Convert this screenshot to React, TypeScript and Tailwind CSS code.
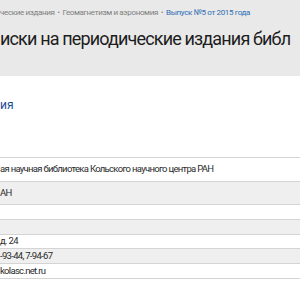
const rows: { text: string; h: string; bg: string }[] = [
  { text: "ая научная библиотека Кольского научного центра РАН", h: "h-[24px]", bg: "bg-white" },
  { text: "АН", h: "h-[23px]", bg: "bg-[#efefef]" },
  { text: "", h: "h-[15px]", bg: "bg-white" },
  { text: "", h: "h-[15px]", bg: "bg-[#efefef]" },
  { text: "д. 24", h: "h-[14px]", bg: "bg-white" },
  { text: "-93-44, 7-94-67", h: "h-[15px]", bg: "bg-[#efefef]" },
  { text: "kolasc.net.ru", h: "h-[15px]", bg: "bg-white" },
];

export default function App() {
  return (
    <div className="w-[300px] h-[300px] overflow-hidden bg-white font-['Roboto',sans-serif]">
      {/* Header with breadcrumbs and title */}
      <div className="h-[76px] bg-[#e9e9e9] pt-[7px] overflow-hidden">
        <div className="flex items-center gap-[3px] whitespace-nowrap text-[8px] leading-[12px] tracking-[-0.35px] text-[#7f7f7f]">
          <span>ческие издания</span>
          <span className="text-[7px]">•</span>
          <span>Геомагнетизм и аэрономия</span>
          <span className="text-[7px]">•</span>
          <span className="text-[#2f6db5]">Выпуск №5 от 2015 года</span>
        </div>
        <h1 className="mt-[8px] whitespace-nowrap text-[18px] leading-[24px] tracking-[-0.85px] text-[#1d1d1d]">
          иски на периодические издания библ
        </h1>
      </div>

      {/* Publisher block */}
      <div className="h-[81px] pt-[16px]">
        <a className="text-[12px] leading-[16px] text-[#1d4b98]">ия</a>
      </div>

      {/* Details table */}
      <div className="border-t border-[#d4d4d4]">
        {rows.map((r, i) => (
          <div
            key={i}
            className={`${r.h} ${r.bg} flex items-center border-b border-[#d4d4d4] whitespace-nowrap text-[9.5px] tracking-[-0.7px] text-[#2b2b2b]`}
          >
            {r.text}
          </div>
        ))}
      </div>
    </div>
  );
}
